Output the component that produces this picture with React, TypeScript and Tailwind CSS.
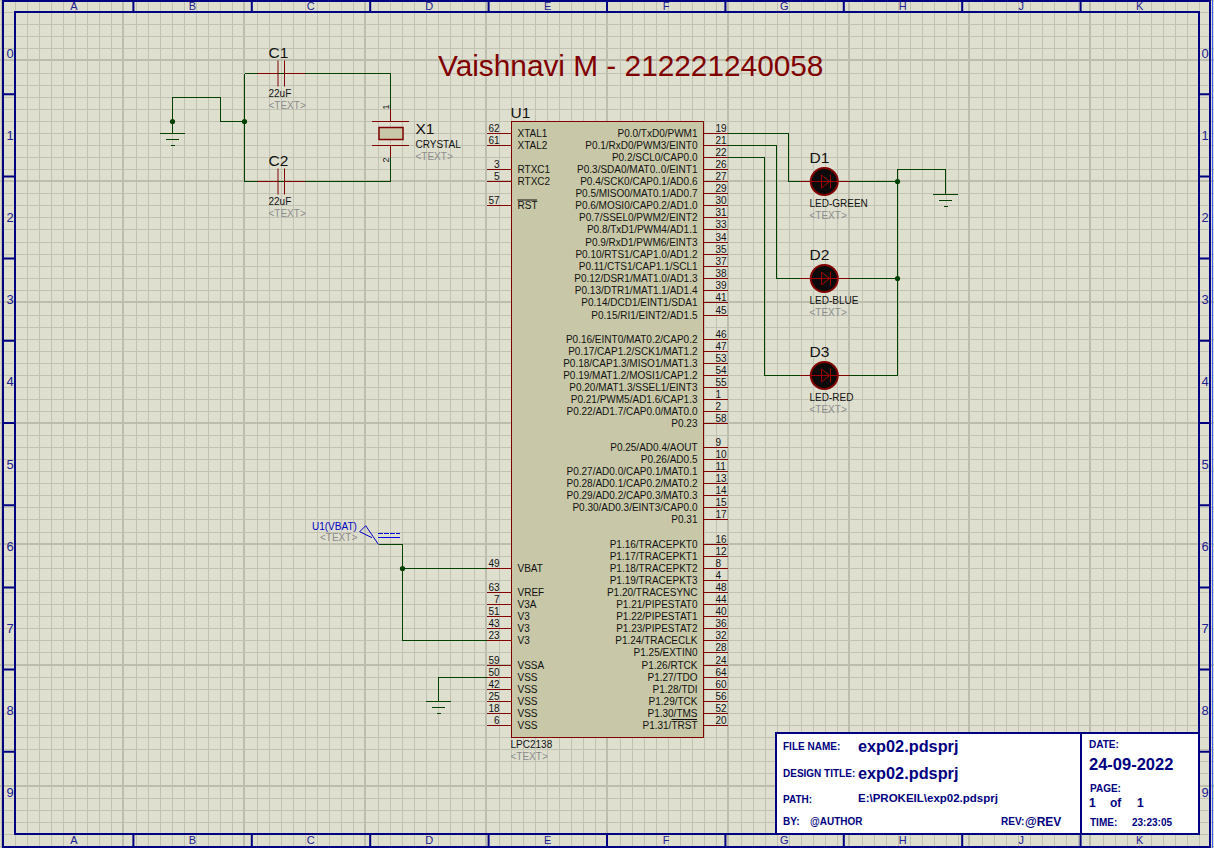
const PAGE = '#dfdfd0';
const GRID = '#c2c2b3';
const MAJOR = '#bdbdae';
const NAVY = '#000080';
const RED = '#800000';
const WIRE = '#004000';
const CHIP = '#c8c8a8';

const rightPins: [number, string, string][] = [
  [0, '19', 'P0.0/TxD0/PWM1'],
  [1, '21', 'P0.1/RxD0/PWM3/EINT0'],
  [2, '22', 'P0.2/SCL0/CAP0.0'],
  [3, '26', 'P0.3/SDA0/MAT0..0/EINT1'],
  [4, '27', 'P0.4/SCK0/CAP0.1/AD0.6'],
  [5, '29', 'P0.5/MISO0/MAT0.1/AD0.7'],
  [6, '30', 'P0.6/MOSI0/CAP0.2/AD1.0'],
  [7, '31', 'P0.7/SSEL0/PWM2/EINT2'],
  [8, '33', 'P0.8/TxD1/PWM4/AD1.1'],
  [9, '34', 'P0.9/RxD1/PWM6/EINT3'],
  [10, '35', 'P0.10/RTS1/CAP1.0/AD1.2'],
  [11, '37', 'P0.11/CTS1/CAP1.1/SCL1'],
  [12, '38', 'P0.12/DSR1/MAT1.0/AD1.3'],
  [13, '39', 'P0.13/DTR1/MAT1.1/AD1.4'],
  [14, '41', 'P0.14/DCD1/EINT1/SDA1'],
  [15, '45', 'P0.15/RI1/EINT2/AD1.5'],
  [17, '46', 'P0.16/EINT0/MAT0.2/CAP0.2'],
  [18, '47', 'P0.17/CAP1.2/SCK1/MAT1.2'],
  [19, '53', 'P0.18/CAP1.3/MISO1/MAT1.3'],
  [20, '54', 'P0.19/MAT1.2/MOSI1/CAP1.2'],
  [21, '55', 'P0.20/MAT1.3/SSEL1/EINT3'],
  [22, '1', 'P0.21/PWM5/AD1.6/CAP1.3'],
  [23, '2', 'P0.22/AD1.7/CAP0.0/MAT0.0'],
  [24, '58', 'P0.23'],
  [26, '9', 'P0.25/AD0.4/AOUT'],
  [27, '10', 'P0.26/AD0.5'],
  [28, '11', 'P0.27/AD0.0/CAP0.1/MAT0.1'],
  [29, '13', 'P0.28/AD0.1/CAP0.2/MAT0.2'],
  [30, '14', 'P0.29/AD0.2/CAP0.3/MAT0.3'],
  [31, '15', 'P0.30/AD0.3/EINT3/CAP0.0'],
  [32, '17', 'P0.31'],
  [34, '16', 'P1.16/TRACEPKT0'],
  [35, '12', 'P1.17/TRACEPKT1'],
  [36, '8', 'P1.18/TRACEPKT2'],
  [37, '4', 'P1.19/TRACEPKT3'],
  [38, '48', 'P1.20/TRACESYNC'],
  [39, '44', 'P1.21/PIPESTAT0'],
  [40, '40', 'P1.22/PIPESTAT1'],
  [41, '36', 'P1.23/PIPESTAT2'],
  [42, '32', 'P1.24/TRACECLK'],
  [43, '28', 'P1.25/EXTIN0'],
  [44, '24', 'P1.26/RTCK'],
  [45, '64', 'P1.27/TDO'],
  [46, '60', 'P1.28/TDI'],
  [47, '56', 'P1.29/TCK'],
  [48, '52', 'P1.30/TMS'],
  [49, '20', 'P1.31/TRST'],
];

const leftPins: [number, string, string][] = [
  [0, '62', 'XTAL1'],
  [1, '61', 'XTAL2'],
  [3, '3', 'RTXC1'],
  [4, '5', 'RTXC2'],
  [6, '57', 'RST'],
  [36, '49', 'VBAT'],
  [38, '63', 'VREF'],
  [39, '7', 'V3A'],
  [40, '51', 'V3'],
  [41, '43', 'V3'],
  [42, '23', 'V3'],
  [44, '59', 'VSSA'],
  [45, '50', 'VSS'],
  [46, '42', 'VSS'],
  [47, '25', 'VSS'],
  [48, '18', 'VSS'],
  [49, '6', 'VSS'],
];

const columns = ['A', 'B', 'C', 'D', 'E', 'F', 'G', 'H', 'J', 'K'];

// the sheet grid is not quite regular: 12px steps, with one 13px step per decade
const MAJOR_X = [2, 123, 244, 365, 486, 607, 728, 849, 969, 1090, 1211];
const BUMP_Y = [1, 5, 1, 9, 99, 99, 99];
const gridXRaw = (n: number) => {
  const d = Math.floor(n / 10);
  const i = n % 10;
  return MAJOR_X[d] + (i ? 1 + 12 * i : 0);
};
const gridYRaw = (n: number) => {
  if (n < 5) return 60 - 12 * (5 - n);
  const d = Math.floor((n - 5) / 10);
  const i = (n - 5) % 10;
  return 60 + 121 * d + 12 * i + (i >= BUMP_Y[d] ? 1 : 0);
};
const pinY = (k: number) => gridYRaw(k + 11) + 0.5;

function Label({ x, y, size = 10, fill = '#111111', anchor = 'start', children }: {
  x: number;
  y: number;
  size?: number;
  fill?: string;
  anchor?: 'start' | 'end' | 'middle';
  children: React.ReactNode;
}) {
  // y is the visual centre of the capitals
  return (
    <text x={x} y={y + size * 0.36} fontSize={size} fill={fill} textAnchor={anchor}>
      {children}
    </text>
  );
}

function Ground({ x, y }: { x: number; y: number }) {
  return (
    <g stroke={WIRE} strokeWidth="1" shapeRendering="crispEdges">
      <path d={`M${x - 12.5} ${y}H${x + 12.5}M${x - 6.5} ${y + 6}H${x + 6.5}M${x - 2} ${y + 12}H${x + 2}`} />
    </g>
  );
}

function Dot({ x, y }: { x: number; y: number }) {
  return <circle cx={x} cy={y} r="2.6" fill={WIRE} />;
}

function Led({ y, name, label }: { y: number; name: string; label: string }) {
  const x = 824.3;
  return (
    <g>
      <path d={`M800 ${y}H849.5`} stroke={RED} strokeWidth="1" fill="none" />
      <circle cx={x} cy={y} r="13.5" fill="#0a0a0a" stroke={RED} strokeWidth="2" />
      <path
        d={`M811 ${y}H838M821.5 ${y - 6.5}V${y + 6.5}L829.5 ${y}ZM830.5 ${y - 7}V${y + 7}`}
        stroke="#a00000"
        strokeWidth="1"
        fill="none"
      />
      <Label x={809.5} y={y - 24} size={15.5}>{name}</Label>
      <Label x={809.5} y={y + 22} size={10}>{label}</Label>
      <Label x={809.5} y={y + 34} size={10} fill="#8c8c8c">{'<TEXT>'}</Label>
    </g>
  );
}

function Capacitor({ y, name }: { y: number; name: string }) {
  return (
    <g>
      <path
        d={`M257.5 ${y}H277.7M284.5 ${y}H305M278 ${y - 13}V${y + 13}M284.5 ${y - 13}V${y + 13}`}
        stroke={RED}
        strokeWidth="1"
        fill="none"
      />
      <Label x={268.5} y={y - 21} size={15.5}>{name}</Label>
      <Label x={268.5} y={y + 19.5} size={10}>22uF</Label>
      <Label x={268.5} y={y + 31.5} size={10} fill="#8c8c8c">{'<TEXT>'}</Label>
    </g>
  );
}

function TitleRow({ className, children }: { className: string; children: React.ReactNode }) {
  return <div className={`flex items-center ${className}`}>{children}</div>;
}

export default function App() {
  const minorX = Array.from({ length: 100 }, (_, n) => n);
  const minorY = Array.from({ length: 71 }, (_, n) => n);
  const rows = Array.from({ length: 10 }, (_, i) => i);

  return (
    <div className="relative w-[1214px] h-[848px] overflow-hidden bg-[#dfdfd0] font-['Liberation_Sans',Arial,sans-serif]">
      <svg width="1214" height="848" viewBox="0 0 1214 848" className="absolute left-0 top-0" fontFamily="'Liberation Sans', Arial, sans-serif">
        <rect width="1214" height="848" fill={PAGE} />

        {/* sheet grid */}
        <g shapeRendering="crispEdges">
          {minorX.map((n) =>
            n % 10 === 0 ? (
              <path key={n} d={`M${gridXRaw(n)} 0V848`} stroke={MAJOR} strokeWidth="2" />
            ) : (
              <path key={n} d={`M${gridXRaw(n) + 0.5} 0V848`} stroke={GRID} strokeWidth="1" />
            ),
          )}
          {minorY.map((n) =>
            n >= 5 && (n - 5) % 10 === 0 ? (
              <path key={n} d={`M0 ${gridYRaw(n)}H1214`} stroke={MAJOR} strokeWidth="2" />
            ) : (
              <path key={n} d={`M0 ${gridYRaw(n) + 0.5}H1214`} stroke={GRID} strokeWidth="1" />
            ),
          )}
        </g>

        {/* sheet frame */}
        <g stroke={NAVY} strokeWidth="2" fill="none">
          <rect x="3" y="1" width="1207" height="846" />
          <rect x="15" y="12" width="1184" height="822" />
          {columns.slice(1).map((c, i) => {
            const x = 15 + 118.4 * (i + 1);
            return <path key={c} d={`M${x} 1V12M${x} 834V847`} />;
          })}
          {rows.slice(1).map((i) => {
            const y = 12 + 82.2 * i;
            return <path key={i} d={`M3 ${y}H15M1199 ${y}H1210`} />;
          })}
        </g>
        <path d="M1212.5 0V848" stroke="#3a5cff" strokeWidth="1" />
        {columns.map((c, i) => (
          <g key={c}>
            <Label x={74 + 118.4 * i} y={6.5} size={11} fill="#202090" anchor="middle">{c}</Label>
            <Label x={74 + 118.4 * i} y={840} size={11} fill="#202090" anchor="middle">{c}</Label>
          </g>
        ))}
        {rows.map((i) => (
          <g key={i}>
            <Label x={10} y={53 + 82.2 * i} size={13} fill="#202090" anchor="middle">{i}</Label>
            <Label x={1205} y={53 + 82.2 * i} size={13} fill="#202090" anchor="middle">{i}</Label>
          </g>
        ))}

        {/* heading */}
        <Label x={438} y={65} size={29.8} fill="#800000">Vaishnavi M - 212221240058</Label>

        {/* wires */}
        <path
          fill="none"
          stroke={WIRE}
          strokeWidth="1"
          shapeRendering="crispEdges"
          d="M172.5 133V97.5H220.5V121.5H244.5M244.5 73.5V181.5M244.5 73.5H390.5V109M244.5 181.5H390.5V157
             M728 133.5H788.5V181.5H800M728 145.5H776.5V278.5H800M728 157.5H764.5V375.5H800
             M849 181.5H897.5M849 278.5H897.5M849 375.5H897.5V169.5H945.5V194
             M378.5 544.5H402.5V640.5H487M402.5 568.5H487M487 677.5H438.5V701"
        />
        <Dot x={172.5} y={121.5} />
        <Dot x={244.5} y={121.5} />
        <Dot x={897.5} y={181.5} />
        <Dot x={897.5} y={278.5} />
        <Dot x={402.5} y={568.5} />
        <Ground x={172.5} y={133.5} />
        <Ground x={945.5} y={194.5} />
        <Ground x={438.5} y={701.5} />

        <Capacitor y={73.5} name="C1" />
        <Capacitor y={181.5} name="C2" />

        {/* crystal */}
        <path d="M390.5 109V121.5M390.5 145.5V157M372 121.5H409M372 145.5H409" stroke={RED} strokeWidth="1" fill="none" />
        <rect x="379" y="127.5" width="24" height="12" fill={CHIP} stroke={RED} strokeWidth="1.5" />
        <text transform="translate(389 107) rotate(-90)" fontSize="9" fill="#111111" textAnchor="middle">1</text>
        <text transform="translate(389 160) rotate(-90)" fontSize="9" fill="#111111" textAnchor="middle">2</text>
        <Label x={415.5} y={128.5} size={15.5}>X1</Label>
        <Label x={415.5} y={144.5} size={10}>CRYSTAL</Label>
        <Label x={415.5} y={156.5} size={10} fill="#8c8c8c">{'<TEXT>'}</Label>

        {/* LPC2138 */}
        <rect x="511.5" y="121.5" width="192" height="616" fill={CHIP} stroke={RED} strokeWidth="1" />
        <Label x={510.5} y={112} size={15.5}>U1</Label>
        <Label x={510.5} y={744.7} size={10}>LPC2138</Label>
        <Label x={510.5} y={756.7} size={10} fill="#8c8c8c">{'<TEXT>'}</Label>
        {leftPins.map(([k, num, name]) => (
          <g key={num}>
            <path d={`M487 ${pinY(k)}H511.5`} stroke={RED} strokeWidth="1" />
            <Label x={499.5} y={pinY(k) - 5.5} anchor="end">{num}</Label>
            <Label x={517.5} y={pinY(k)}>{name}</Label>
          </g>
        ))}
        <path d={`M517.5 ${pinY(6) - 5.5}H537`} stroke="#111111" strokeWidth="1" />
        {rightPins.map(([k, num, name]) => (
          <g key={num}>
            <path d={`M703.5 ${pinY(k)}H728`} stroke={RED} strokeWidth="1" />
            <Label x={715.5} y={pinY(k) - 5.5}>{num}</Label>
            <Label x={697.5} y={pinY(k)} anchor="end">{name}</Label>
          </g>
        ))}
        <path d={`M671.5 ${pinY(49) - 6}H697`} stroke="#111111" strokeWidth="1" />

        <Led y={181.5} name="D1" label="LED-GREEN" />
        <Led y={278.5} name="D2" label="LED-BLUE" />
        <Led y={375.5} name="D3" label="LED-RED" />

        {/* VBAT power terminal */}
        <path d="M378.5 544.5L365.7 525.7L359.7 531.7L372 537.7" stroke="#0000c0" strokeWidth="1" fill="none" />
        <path d="M378 533.5H400" stroke="#0000e0" strokeWidth="1" strokeDasharray="5 1" />
        <path d="M378 537.5H400" stroke="#0000e0" strokeWidth="1" />
        <Label x={312} y={526} size={10} fill="#0000c0">U1(VBAT)</Label>
        <Label x={320} y={537.7} size={10} fill="#8c8c8c">{'<TEXT>'}</Label>
      </svg>

      {/* title block */}
      <div className="absolute left-[775px] top-[732px] w-[425px] h-[103px] flex border-2 border-[#000080] bg-white text-[#000080] font-bold">
        <div className="w-[305px] border-r-2 border-[#000080] flex flex-col pl-[6px]">
          <TitleRow className="h-[24px]">
            <span className="w-[75px] text-[10px]">FILE NAME:</span>
            <span className="text-[16.3px]">exp02.pdsprj</span>
          </TitleRow>
          <TitleRow className="h-[30px]">
            <span className="w-[75px] text-[10px]">DESIGN TITLE:</span>
            <span className="text-[16.3px]">exp02.pdsprj</span>
          </TitleRow>
          <TitleRow className="h-[22px]">
            <span className="w-[75px] text-[10px]">PATH:</span>
            <span className="text-[11.5px]">E:\PROKEIL\exp02.pdsprj</span>
          </TitleRow>
          <TitleRow className="h-[23px]">
            <span className="w-[27px] text-[10px]">BY:</span>
            <span className="w-[191px] text-[10px]">@AUTHOR</span>
            <span className="w-[24px] text-[10px]">REV:</span>
            <span className="text-[12px]">@REV</span>
          </TitleRow>
        </div>
        <div className="flex-1 flex flex-col pl-[7px]">
          <TitleRow className="h-[20px]">
            <span className="text-[10px]">DATE:</span>
          </TitleRow>
          <TitleRow className="h-[20px]">
            <span className="text-[16.5px]">24-09-2022</span>
          </TitleRow>
          <TitleRow className="h-[22px] pl-[1px] pt-[7px]">
            <span className="text-[10px]">PAGE:</span>
          </TitleRow>
          <TitleRow className="h-[14px] text-[12px]">
            <span className="w-[21px]">1</span>
            <span className="w-[27px]">of</span>
            <span>1</span>
          </TitleRow>
          <TitleRow className="flex-1 pl-[1px] pt-[2px] text-[10px]">
            <span className="w-[42px]">TIME:</span>
            <span>23:23:05</span>
          </TitleRow>
        </div>
      </div>
    </div>
  );
}
